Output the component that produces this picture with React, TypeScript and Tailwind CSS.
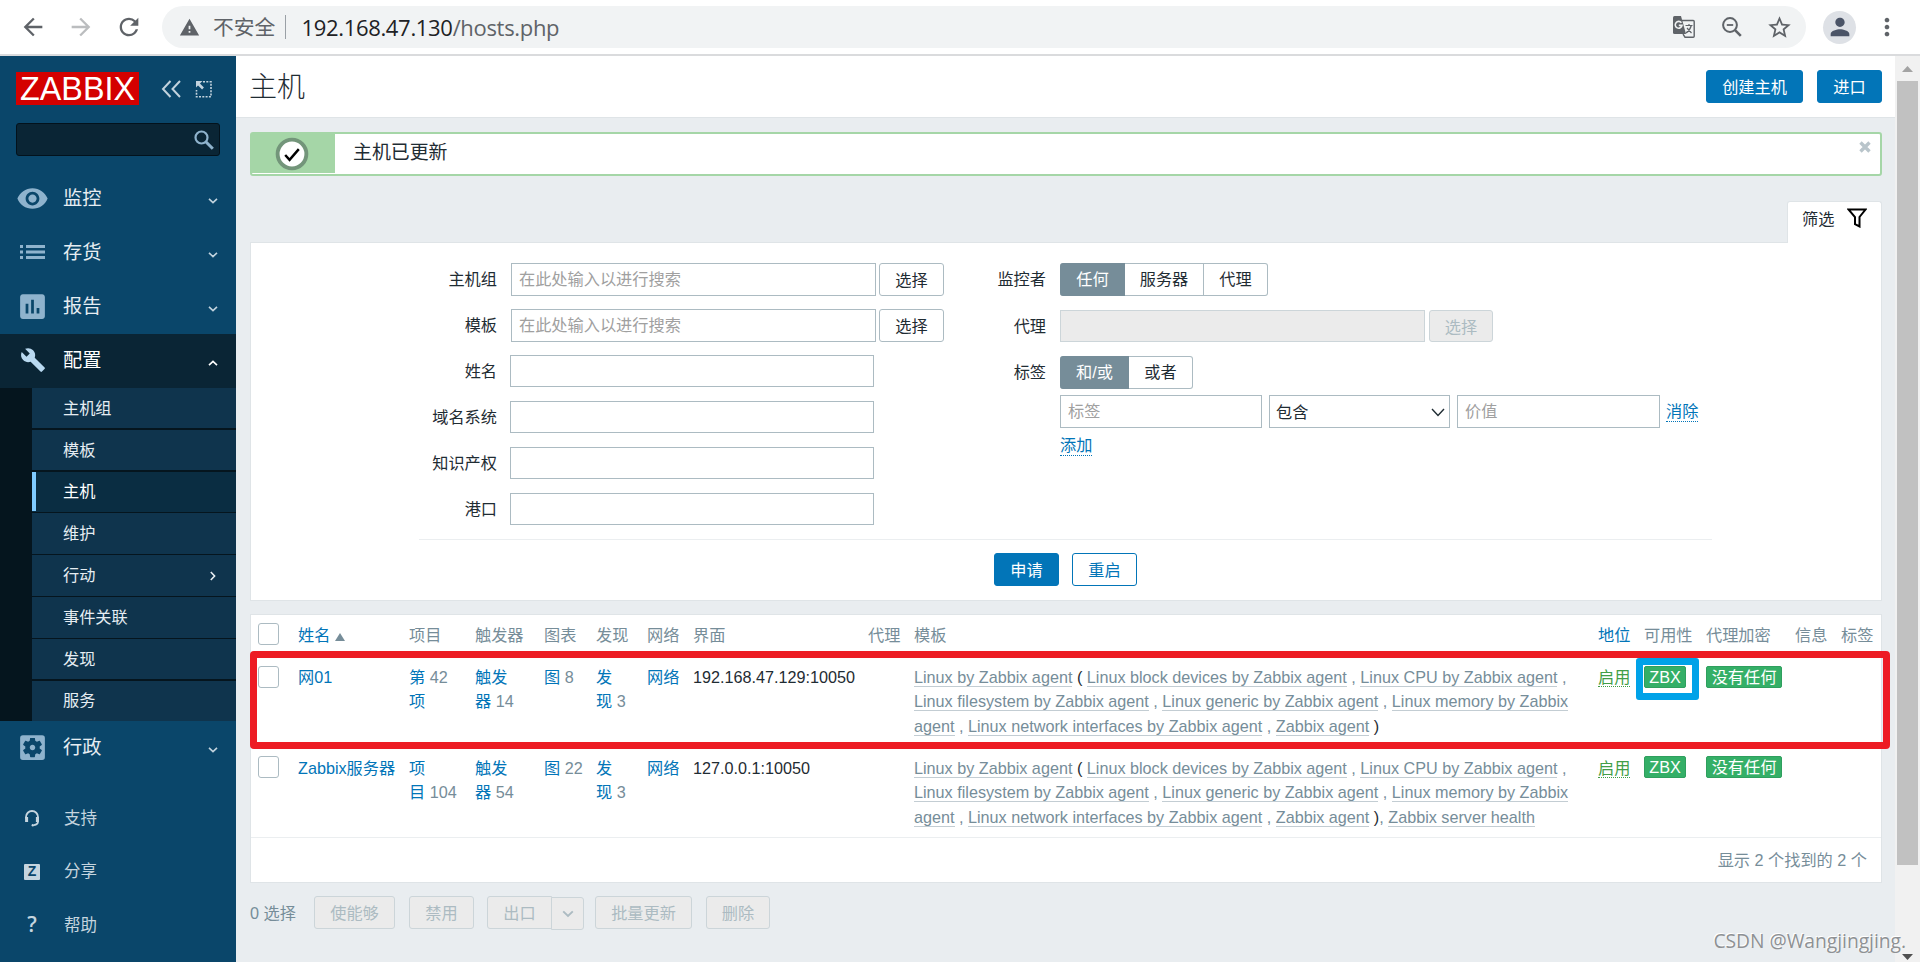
import { Fragment } from "react"
import type { ReactNode } from "react"
import clsx from "clsx"
import {
  MdArrowBack,
  MdArrowForward,
  MdBuild,
  MdInsertChart,
  MdMoreVert,
  MdPerson,
  MdRefresh,
  MdSettingsApplications,
  MdStarBorder,
  MdVisibility,
  MdWarning,
} from "react-icons/md"

const TEMPLATES = [
  "Linux block devices by Zabbix agent",
  "Linux CPU by Zabbix agent",
  "Linux filesystem by Zabbix agent",
  "Linux generic by Zabbix agent",
  "Linux memory by Zabbix agent",
  "Linux network interfaces by Zabbix agent",
  "Zabbix agent",
]

const SUBMENU = [
  { label: "主机组", size: "h-[42px] border-b-2" },
  { label: "模板", size: "h-[42px] border-b-2" },
  { label: "主机", size: "h-[41px] border-b pb-px", active: true },
  { label: "维护", size: "h-[42px] border-b" },
  { label: "行动", size: "h-[42px] border-b", arrow: true },
  { label: "事件关联", size: "h-[42px] border-b" },
  { label: "发现", size: "h-[42px] border-b-2" },
  { label: "服务", size: "h-[40px] pb-px" },
]

const GRID =
  "grid grid-cols-[47px_111px_66px_69px_52px_51px_46px_175px_46px_684px_46px_62px_89px_46px_1fr]"

function Chevron({ className }: { className?: string }) {
  return (
    <svg viewBox="0 0 10 6" className={clsx("h-[6px] w-[10px]", className)} fill="none" stroke="currentColor" strokeWidth="1.6">
      <path d="M1 0.8 5 4.6 9 0.8" />
    </svg>
  )
}

function TranslateIcon({ className }: { className?: string }) {
  return (
    <svg viewBox="0 0 22 22" className={className} fill="none" stroke="#5f6368">
      <path d="M9 4.500h11.200q1 0 1 1v14.700q0 1-1 1h-8.200l-2-3" strokeWidth="1.400" />
      <path d="M12.500 9.500h7M16 8v1.500M18.300 9.500q-1.300 5-5.300 7.500M14 12l4.500 5" strokeWidth="1.200" />
      <path d="M1.500 0H8l5 18H1.500Q0 18 0 16.500v-15Q0 0 1.500 0z" fill="#5f6368" stroke="none" />
      <path d="M8.400 6.800A3.400 3.400 0 1 0 9 9.400H5.800" stroke="#f1f3f4" strokeWidth="1.600" />
    </svg>
  )
}

function ZoomOutIcon({ className }: { className?: string }) {
  return (
    <svg viewBox="0 0 20 20" className={className} fill="none" stroke="#5f6368">
      <circle cx="8" cy="8" r="6.900" strokeWidth="2" />
      <path d="M4.800 8h6.400" strokeWidth="1.800" />
      <path d="m12.800 12.800 6 6" strokeWidth="2.600" />
    </svg>
  )
}

function ListIcon() {
  return (
    <svg viewBox="0 0 25 16" className="h-[16px] w-[25px]" fill="currentColor">
      <path d="M0 1h3v3H0zM6 1h19v3H6zM0 6.500h3v3H0zM6 6.500h19v3H6zM0 12h3v3H0zM6 12h19v3H6z" />
    </svg>
  )
}

function BrowserBar() {
  return (
    <div className="flex h-[56px] items-center border-b-2 border-[#dadbdd] bg-white text-[#5f6368]">
      <MdArrowBack className="ml-[19px] size-7 shrink-0" />
      <MdArrowForward className="ml-[20px] size-7 shrink-0 text-[#bbbdbf]" />
      <MdRefresh className="ml-[20px] size-7 shrink-0" />
      <div className="ml-[19px] flex h-[42px] w-[1644px] shrink-0 items-center rounded-full bg-[#f1f3f4]">
        <MdWarning className="ml-[17px] size-[21px]" />
        <span className="mt-px ml-[13px] text-[20.8px]">不安全</span>
        <span className="ml-[10px] h-6 w-px bg-[#9aa0a6]" />
        <span className="ml-[15px] font-['Open_Sans'] text-[22px] tracking-[-0.32px]">
          <span className="text-[#202124]">192.168.47.130</span>/hosts.php
        </span>
        <TranslateIcon className="ml-auto size-[22px] shrink-0" />
        <ZoomOutIcon className="ml-[27px] size-[20px] shrink-0" />
        <MdStarBorder className="mr-[13px] ml-[24px] size-[27px] shrink-0" />
      </div>
      <div className="ml-[17px] flex size-[33px] items-center justify-center rounded-full bg-[#dee1e6] text-[#4b5467]">
        <MdPerson className="size-[28px]" />
      </div>
      <MdMoreVert className="ml-[17px] size-[28px]" />
    </div>
  )
}

function MenuItem({ icon, label, active }: { icon: ReactNode; label: string; active?: boolean }) {
  return (
    <div className={clsx("flex h-[54px] items-center", active && "bg-[#0a2535]")}>
      <span className={clsx("mr-[-2px] flex w-[65px] justify-center pb-[2px]", active ? "text-[#b9d9f0]" : "text-[#8fb3cd]")}>{icon}</span>
      <span className={clsx("text-[19.2px]", active ? "text-white" : "text-[#e6edf2]")}>{label}</span>
      <Chevron className={clsx("mt-[4px] mr-[18px] ml-auto", active ? "rotate-180 text-white" : "text-[#c2d3de]")} />
    </div>
  )
}

function Sidebar() {
  return (
    <div className="flex w-[236px] shrink-0 flex-col bg-[#0a466a] text-[#e6edf2]">
      <div className="mt-4 flex h-[33px] items-center pl-4">
        <svg className="h-[33px] w-[123px] overflow-visible bg-[#d40000]" viewBox="0 0 123 33">
          <text x="4" y="28" fontSize="33" fill="#fff" textLength="115" lengthAdjust="spacingAndGlyphs">ZABBIX</text>
        </svg>
        <svg className="ml-[22px] h-[18px] w-[21px]" viewBox="0 0 21 18" fill="none" stroke="#c2d3de" strokeWidth="2">
          <path d="M9.500 1 2 9l7.500 8M19 1l-7.500 8 7.500 8" />
        </svg>
        <svg className="ml-[13px] h-[18px] w-[17px]" viewBox="0 0 17 18" fill="none" stroke="#c2d3de" strokeWidth="1.6">
          <path d="M8 1.800h8v15H1.500V10" strokeDasharray="2 1.300" />
          <path d="M2.500 3 8 8.500" strokeWidth="2.600" />
          <path d="M1 1h6.500L1 7.500z" fill="#c2d3de" stroke="none" />
        </svg>
      </div>
      <div className="mt-[18px] ml-4 flex h-[33px] w-[204px] items-center justify-end rounded-[3px] border border-[#03121c] bg-[#0a2535] pr-[5px]">
        <svg className="size-[20px]" viewBox="0 0 20 20" fill="none" stroke="#8fb3cd">
          <circle cx="7.500" cy="7.500" r="6" strokeWidth="2.200" />
          <path d="m11.800 11.800 7 7" strokeWidth="3" />
        </svg>
      </div>
      <div className="mt-[16px]">
        <MenuItem icon={<MdVisibility className="size-[33px]" />} label="监控" />
        <MenuItem icon={<ListIcon />} label="存货" />
        <MenuItem icon={<MdInsertChart className="size-[33px]" />} label="报告" />
        <MenuItem icon={<MdBuild className="size-[26px]" />} label="配置" active />
      </div>
      <div className="bg-[#05151e] pl-8 text-[16.2px]">
        {SUBMENU.map((item) => (
          <div
            key={item.label}
            className={clsx(
              "flex items-center border-[#05151e]",
              item.size,
              item.active ? "bg-[#0a2d42] text-white" : "bg-[#0f344d]"
            )}
          >
            <span className={clsx("w-1 self-stretch", item.active && "bg-[#7fcbff]")} />
            <span className="ml-[27px]">{item.label}</span>
            {item.arrow && <Chevron className="mr-[18px] ml-auto -rotate-90" />}
          </div>
        ))}
      </div>
      <MenuItem icon={<MdSettingsApplications className="size-[33px]" />} label="行政" />
      <div className="mt-[17px] text-[16.5px] text-[#c5d5df]">
        <div className="flex h-[53px] items-center">
          <svg className="ml-[24px] h-[17px] w-[16px]" viewBox="0 0 16 17" fill="none" stroke="currentColor" strokeWidth="1.800">
            <path d="M2 8.500V7a6 6 0 0 1 12 0v4.500q0 3-4 3.600" />
            <path d="M2.600 7v5M13.400 7v5" strokeWidth="3" />
            <circle cx="8.800" cy="15.200" r="1.200" fill="currentColor" stroke="none" />
          </svg>
          <span className="ml-[24px]">支持</span>
        </div>
        <div className="flex h-[53px] items-center">
          <span className="ml-[24px] flex size-4 items-center justify-center rounded-[1px] bg-[#c5d5df] text-[14px] font-bold text-[#0a466a]">Z</span>
          <span className="ml-[24px]">分享</span>
        </div>
        <div className="flex h-[54px] items-center">
          <span className="ml-[24px] w-4 text-center font-['Open_Sans'] text-[21px] font-semibold">?</span>
          <span className="ml-[24px]">帮助</span>
        </div>
      </div>
    </div>
  )
}

function Button({ children, className }: { children: ReactNode; className?: string }) {
  return (
    <button className={clsx("flex h-[33px] items-center justify-center rounded-[3px] border pt-px", className)}>{children}</button>
  )
}

const primary = "border-[#0275b8] bg-[#0275b8] text-white"
const plain = "border-[#acbbc2] bg-white"
const disabled = "border-[#ccd5d9] bg-[#ebebeb] text-[#acbbc2]"

function Message() {
  return (
    <div className="flex h-[44px] rounded-[3px] border-2 border-[#a5d6a7] bg-white">
      <div className="flex h-[39px] w-[83px] items-center justify-center bg-[#a5d6a7]">
        <svg className="mr-[3px] size-[34px]" viewBox="0 0 35 35">
          <circle cx="17.500" cy="17.500" r="14.800" fill="#fff" stroke="#73957a" strokeWidth="4" />
          <path d="m10.500 18.500 4.500 5 9.500-11" fill="none" stroke="#000" strokeWidth="2.500" />
        </svg>
      </div>
      <span className="ml-[18px] pt-[6px] text-[18.900px] leading-[26px]">主机已更新</span>
      <svg className="mt-[7px] mr-[9px] ml-auto size-[12px]" viewBox="0 0 12 12" stroke="#b9c5cb" strokeWidth="3.400">
        <path d="m1.500 1.500 9 9m0-9-9 9" />
      </svg>
    </div>
  )
}

function LeftField({ label, picker }: { label: string; picker?: boolean }) {
  return (
    <div className="flex h-[46px] items-start">
      <span className="w-[246px] text-right leading-[33px]">{label}</span>
      {picker ? (
        <>
          <div className="ml-[14px] h-[33px] w-[365px] border border-[#acbbc2] pl-[7px] leading-[31px] text-[#a0a0a0]">
            在此处输入以进行搜索
          </div>
          <Button className={clsx("ml-[3px] w-[65px]", plain)}>选择</Button>
        </>
      ) : (
        <div className="ml-[13px] h-8 w-[364px] border border-[#acbbc2]" />
      )}
    </div>
  )
}

function Segments({ items }: { items: [string, string][] }) {
  return (
    <div className="ml-[13px] flex h-[33px] leading-[31px]">
      {items.map(([text, width], i) => (
        <span
          key={text}
          className={clsx(
            "border-y text-center",
            width,
            i === 0 ? "rounded-l-[3px] border-[#768d99] bg-[#768d99] text-white" : "border-r border-[#acbbc2]",
            i === items.length - 1 && "rounded-r-[3px]"
          )}
        >
          {text}
        </span>
      ))}
    </div>
  )
}

function Filter() {
  return (
    <div className="mt-[25px]">
      <div className="relative z-10 ml-auto -mb-px flex h-[42px] w-[95px] rounded-t-[3px] border border-b-0 border-[#dfe4e7] bg-white pl-[14px]">
        <span className="leading-[35px]">筛选</span>
        <svg className="mt-[6px] ml-[13px] size-[20px]" viewBox="0 0 20 20" fill="none" stroke="#000" strokeWidth="2">
          <path d="M1.500 1.500h17L12.500 9v9.500L8 16.200V9z" />
        </svg>
      </div>
      <div className="h-[359px] border border-[#dfe4e7] bg-white pt-5">
        <div className="flex h-[276px]">
          <div className="w-[697px]">
            <LeftField label="主机组" picker />
            <LeftField label="模板" picker />
            <LeftField label="姓名" />
            <LeftField label="域名系统" />
            <LeftField label="知识产权" />
            <LeftField label="港口" />
          </div>
          <div className="w-[780px]">
            <div className="flex h-[47px]">
              <span className="mr-px w-[98px] text-right leading-[33px]">监控者</span>
              <Segments items={[["任何", "w-[65px]"], ["服务器", "w-[79px]"], ["代理", "w-[64px]"]]} />
            </div>
            <div className="flex h-[46px]">
              <span className="w-[98px] text-right leading-[33px]">代理</span>
              <div className="ml-[14px] h-8 w-[365px] border border-[#ccd5d9] bg-[#ebebeb]" />
              <button className={clsx("ml-1 h-8 w-16 rounded-[3px] border pt-[2px]", disabled)}>选择</button>
            </div>
            <div className="flex h-[39px]">
              <span className="mr-px w-[98px] text-right leading-[33px]">标签</span>
              <Segments items={[["和/或", "w-[69px]"], ["或者", "w-[64px]"]]} />
            </div>
            <div className="ml-[112px] flex h-[33px] leading-[31px]">
              <div className="w-[202px] border border-[#acbbc2] pl-[7px] text-[#a0a0a0]">标签</div>
              <div className="ml-[7px] flex w-[181px] items-center border border-[#acbbc2] pt-px pr-[4px] pl-[6px]">
                <span>包含</span>
                <svg className="ml-auto h-[9px] w-[14px]" viewBox="0 0 14 9" fill="none" stroke="#1f2c33" strokeWidth="1.400">
                  <path d="m1 1 6 6.500L13 1" />
                </svg>
              </div>
              <div className="ml-[7px] w-[203px] border border-[#acbbc2] pl-[7px] text-[#a0a0a0]">价值</div>
              <div className="ml-[6px] pt-px text-[#0275b8]">
                <span className="border-b border-dotted border-[#0275b8] pb-px">消除</span>
              </div>
            </div>
            <div className="ml-[112px] pt-[2px] leading-[31px] text-[#0275b8]">
              <span className="border-b border-dotted border-[#0275b8] pb-px">添加</span>
            </div>
          </div>
        </div>
        <div className="mx-[168px] w-[1293px] border-t border-[#ebeef0]" />
        <div className="mt-[13px] ml-[743px] flex gap-[13px]">
          <Button className={clsx("w-[65px]", primary)}>申请</Button>
          <Button className="w-[65px] border-[#0275b8] text-[#0275b8]">重启</Button>
        </div>
      </div>
    </div>
  )
}

function Checkbox() {
  return <span className="ml-[7px] block h-[22px] w-[21px] rounded-[3px] border border-[#acbbc2] bg-white" />
}

function TemplateLink({ children }: { children: string }) {
  return <span className="border-b border-[#c3cdd3]">{children}</span>
}

interface HostRowProps {
  name: string
  items: ReactNode
  triggers: number
  graphs: number
  address: string
  extra?: string
  first?: boolean
}

function HostRow({ name, items, triggers, graphs, address, extra, first }: HostRowProps) {
  const badge = clsx(
    "flex h-[22px] items-center justify-center self-start rounded-[2px] border border-[#2f9f5e] bg-[#34af67] text-white",
    first && "mt-px"
  )

  return (
    <div className={clsx(GRID, "h-[91px] border-b border-[#ebeef0] pt-[9px] leading-[24.400px] text-[#768d99] [&_b]:font-normal [&_b]:text-[#0275b8]")}>
      <div className={clsx(first && "pt-px")}><Checkbox /></div>
      <b>{name}</b>
      <div>{items}</div>
      <div><b>触发<br />器</b> {triggers}</div>
      <div><b>图</b> {graphs}</div>
      <div><b>发<br />现</b> 3</div>
      <b>网络</b>
      <div className="text-[#1f2c33]">{address}</div>
      <div />
      <div className="pr-[14px]">
        <TemplateLink>Linux by Zabbix agent</TemplateLink>
        <span className="text-[#1f2c33]"> ( </span>
        {TEMPLATES.map((t, i) => (
          <Fragment key={t}>
            {i > 0 && " , "}
            <TemplateLink>{t}</TemplateLink>
          </Fragment>
        ))}
        <span className="text-[#1f2c33]"> )</span>
        {extra && <>, <TemplateLink>{extra}</TemplateLink></>}
      </div>
      <div><span className="border-b border-dotted border-[#429e47] text-[#429e47]">启用</span></div>
      <div className={clsx(badge, "w-[42px]")}>ZBX</div>
      <div className={clsx(badge, "w-[76px]")}>没有任何</div>
    </div>
  )
}

function HostTable() {
  return (
    <div className="relative mt-[13px] h-[269px] border border-[#dfe4e7] bg-white">
      <div className={clsx(GRID, "h-[41px] border-b border-[#dfe4e7] leading-[41px] text-[#768d99]")}>
        <div className="pt-2"><Checkbox /></div>
        <span className="flex items-center text-[#0275b8]">
          姓名
          <svg className="mt-[3px] ml-[5px] h-[8px] w-[10px]" viewBox="0 0 10 8" fill="#768d99"><path d="M5 0l5 8H0z" /></svg>
        </span>
        <span>项目</span>
        <span>触发器</span>
        <span>图表</span>
        <span>发现</span>
        <span>网络</span>
        <span>界面</span>
        <span>代理</span>
        <span>模板</span>
        <span className="text-[#0275b8]">地位</span>
        <span>可用性</span>
        <span>代理加密</span>
        <span>信息</span>
        <span>标签</span>
      </div>
      <HostRow
        first
        name="网01"
        items={<><b>第</b> 42<br /><b>项</b></>}
        triggers={14}
        graphs={8}
        address="192.168.47.129:10050"
      />
      <HostRow
        name="Zabbix服务器"
        items={<><b>项<br />目</b> 104</>}
        triggers={54}
        graphs={22}
        address="127.0.0.1:10050"
        extra="Zabbix server health"
      />
      <div className="pr-[14px] text-right leading-[45px] text-[#768d99]">显示 2 个找到的 2 个</div>

      {/* Hand-drawn markers over the first host */}
      <div className="absolute top-[36px] -left-px h-[98px] w-[1640px] rounded-[4px] border-[7px] border-[#ed1c24]" />
      <div className="absolute top-[43px] left-[1385px] h-[42px] w-[63px] rounded-[3px] border-[7px] border-[#00a2e8]" />
    </div>
  )
}

function Actions() {
  return (
    <div className="mt-[13px] flex text-[#768d99]">
      <span className="w-[64px] leading-[34px]">0 选择</span>
      <Button className={clsx("w-[81px]", disabled)}>使能够</Button>
      <Button className={clsx("ml-[14px] w-[65px]", disabled)}>禁用</Button>
      <Button className={clsx("ml-[13px] w-[65px] rounded-r-none", disabled)}>出口</Button>
      <Button className={clsx("mt-px -ml-px w-[33px] rounded-l-none", disabled)}>
        <Chevron className="h-[8px] w-[12px]" />
      </Button>
      <Button className={clsx("ml-[11px] w-[97px]", disabled)}>批量更新</Button>
      <Button className={clsx("ml-[14px] w-[64px]", disabled)}>删除</Button>
    </div>
  )
}

export default function App() {
  return (
    <div className="relative flex h-[962px] w-[1920px] flex-col overflow-hidden bg-[#e9edf0] font-['Liberation_Sans','Noto_Sans_CJK_SC',sans-serif] text-[16.200px] text-[#1f2c33]">
      <BrowserBar />
      <div className="flex h-[906px]">
        <Sidebar />
        <div className="w-[1659px]">
          <div className="flex h-[62px] items-center border-b border-[#dfe4e7] bg-white pr-[13px] pl-[13px]">
            <h1 className="mt-[3px] mr-auto text-[28px] font-light">主机</h1>
            <Button className={clsx("w-[97px]", primary)}>创建主机</Button>
            <Button className={clsx("ml-[14px] w-[65px]", primary)}>进口</Button>
          </div>
          <div className="pt-[14px] pr-[13px] pl-[14px]">
            <Message />
            <Filter />
            <HostTable />
            <Actions />
          </div>
        </div>
        <div className="flex w-[25px] flex-col items-center bg-[#f1f1f1]">
          <svg className="mt-[10px] h-[6px] w-[11px]" viewBox="0 0 11 6" fill="#a3a3a3"><path d="M5.500 0 11 6H0z" /></svg>
          <div className="mt-[9px] h-[784px] w-[21px] bg-[#c1c1c1]" />
          <svg className="mt-auto mb-[2px] h-[6px] w-[11px]" viewBox="0 0 11 6" fill="#505050"><path d="M0 0h11L5.500 6z" /></svg>
        </div>
      </div>
      <div className="absolute right-[14px] bottom-[6px] font-['Open_Sans'] text-[19.200px] leading-[30px] text-[#8e9194] [text-shadow:-1px_-1px_0_#fff]">
        CSDN @Wangjingjing.
      </div>
    </div>
  )
}
